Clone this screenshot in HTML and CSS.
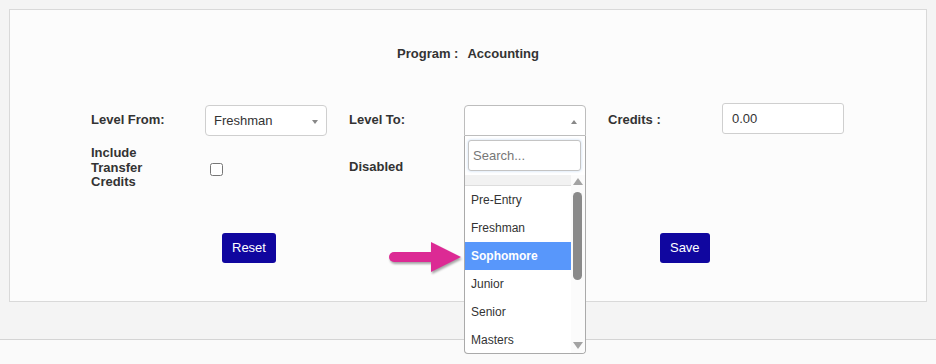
FILE: index.html
```html
<!DOCTYPE html>
<html lang="en">
<head>
  <meta charset="UTF-8" />
  <meta name="viewport" content="width=device-width, initial-scale=1.0"/>
  <title>Level Settings</title>
  <link rel="stylesheet" href="styles.css">
</head>
<body>

  <div class="page">
    <div class="panel">

      <div class="program">
        <span>Program :</span>
        <span>Accounting</span>
      </div>

      <div class="form-grid">
        <label class="lbl">Level From:</label>
        <div class="field">
          <div class="select">
            <span>Freshman</span>
            <i class="caret"></i>
          </div>
        </div>

        <label class="lbl">Level To:</label>
        <div class="field">
          <div class="select open">
            <span></span>
            <i class="caret up"></i>
          </div>

          <!-- open dropdown -->
          <div class="dropdown">
            <div class="dd-search">
              <input type="text" placeholder="Search...">
            </div>
            <div class="dd-body">
              <ul class="dd-list">
                <li class="dd-head"></li>
                <li>Pre-Entry</li>
                <li>Freshman</li>
                <li class="active">Sophomore</li>
                <li>Junior</li>
                <li>Senior</li>
                <li>Masters</li>
              </ul>
              <div class="dd-bar">
                <i class="bar-up"></i>
                <div class="bar-thumb"></div>
                <i class="bar-down"></i>
              </div>
            </div>
          </div>
        </div>

        <label class="lbl">Credits :</label>
        <div class="field top">
          <input class="text-input" type="text" value="0.00">
        </div>

        <label class="lbl multi">Include<br>Transfer<br>Credits</label>
        <div class="field">
          <input class="check" type="checkbox">
        </div>

        <label class="lbl">Disabled</label>
        <div class="field"></div>
      </div>

      <div class="buttons">
        <button class="btn">Reset</button>
        <button class="btn">Save</button>
      </div>

      <!-- callout arrow -->
      <svg class="callout" width="80" height="36" viewBox="0 0 80 36">
        <line x1="10" y1="17" x2="50" y2="17" stroke="#dc2a94" stroke-width="10" stroke-linecap="round"/>
        <polygon points="47,2 77,17 47,32" fill="#dc2a94"/>
      </svg>
    </div>
  </div>
  <div class="footer"></div>

</body>
</html>
```

FILE: styles.css
```css
* {
  margin: 0;
  padding: 0;
  box-sizing: border-box;
}

body {
  font-family: "Liberation Sans", Arial, sans-serif;
  font-size: 13px;
  color: #333;
  background: #fafafa;
}

.page {
  height: 340px;
  padding: 9px 9px 0 9px;
  background: #f4f4f4;
  border-bottom: 1px solid #d4d4d4;
}

.footer {
  height: 24px;
  background: #fafafa;
}

.panel {
  position: relative;
  z-index: 2;
  height: 293px;
  background: #fcfcfc;
  border: 1px solid #d9d9d9;
  padding-top: 36px;
}

.program {
  display: flex;
  justify-content: center;
  gap: 9px;
  font-weight: bold;
  line-height: 15px;
}

.form-grid {
  display: grid;
  grid-template-columns: 114px 144px 115px 144px 114px 122px;
  row-gap: 10px;
  align-items: center;
  margin-top: 44px;
  padding-left: 81px;
}

.lbl {
  font-weight: bold;
  line-height: 15px;
  margin-top: -2px;
}

.lbl.multi {
  line-height: 14.5px;
  margin-top: 0;
}

.field {
  position: relative;
}

.field.top {
  align-self: start;
}

.select {
  display: flex;
  align-items: center;
  justify-content: space-between;
  width: 122px;
  height: 31px;
  padding: 0 8px 0 8px;
  background: #fff;
  border: 1px solid #cfcfcf;
  border-radius: 4px;
}

.select.open {
  border-color: #bdbdbd;
  border-radius: 4px 4px 0 0;
}

.caret {
  width: 0;
  height: 0;
  margin-top: 3px;
  border-left: 3.5px solid transparent;
  border-right: 3.5px solid transparent;
  border-top: 4px solid #888;
}

.caret.up {
  border-top: none;
  border-bottom: 4px solid #888;
}

.dropdown {
  position: absolute;
  top: 31px;
  left: 0;
  width: 122px;
  background: #fff;
  border: 1px solid #aaa;
  border-top: none;
  border-radius: 0 0 4px 4px;
  overflow: hidden;
  z-index: 10;
}

.dd-search {
  padding: 4px 4px 4px 3px;
}

.dd-search input {
  display: block;
  width: 100%;
  height: 31px;
  padding: 0 4px;
  font-family: "Liberation Sans", Arial, sans-serif;
  font-size: 13px;
  border: 1px solid #c4c4c4;
  border-radius: 3px;
  box-shadow: 0 0 3px rgba(120, 170, 230, 0.45);
  outline: none;
}

.dd-search input::placeholder {
  color: #777;
}

.dd-body {
  display: flex;
  height: 178px;
}

.dd-list {
  flex: 1;
  list-style: none;
  font-size: 12px;
}

.dd-list li {
  height: 28px;
  line-height: 28px;
  padding-left: 6px;
  color: #333;
}

.dd-list li.dd-head {
  height: 11px;
  background: #f2f2f2;
  border-bottom: 1px solid #ddd;
}

.dd-list li.active {
  background: #5897fb;
  color: #fff;
  font-weight: bold;
}

.dd-bar {
  position: relative;
  width: 14px;
  background: #fbfbfb;
}

.bar-up,
.bar-down {
  position: absolute;
  left: 2px;
  width: 0;
  height: 0;
  border-left: 5px solid transparent;
  border-right: 5px solid transparent;
}

.bar-up {
  top: 3px;
  border-bottom: 7px solid #a3a3a3;
}

.bar-down {
  bottom: 4px;
  border-top: 7px solid #a3a3a3;
}

.bar-thumb {
  position: absolute;
  top: 17px;
  left: 2px;
  width: 9px;
  height: 88px;
  background: #8a8a8a;
  border-radius: 5px;
}

.text-input {
  display: block;
  width: 122px;
  height: 31px;
  padding: 0 9px;
  margin-top: -2px;
  font-family: "Liberation Sans", Arial, sans-serif;
  font-size: 13px;
  color: #333;
  background: #fff;
  border: 1px solid #cfcfcf;
  border-radius: 3px;
}

.check {
  display: block;
  width: 13px;
  height: 13px;
  margin-left: 5px;
  margin-top: 3px;
}

.buttons {
  display: flex;
  gap: 384px;
  margin-top: 43px;
  padding-left: 212px;
}

.btn {
  height: 30px;
  padding: 0 10px;
  font-family: "Liberation Sans", Arial, sans-serif;
  font-size: 13px;
  color: #fff;
  background: #10069f;
  border: none;
  border-radius: 3px;
  cursor: pointer;
}

.callout {
  position: absolute;
  left: 374px;
  top: 230px;
  filter: drop-shadow(1px 2px 1px rgba(0, 0, 0, 0.35));
}
```
